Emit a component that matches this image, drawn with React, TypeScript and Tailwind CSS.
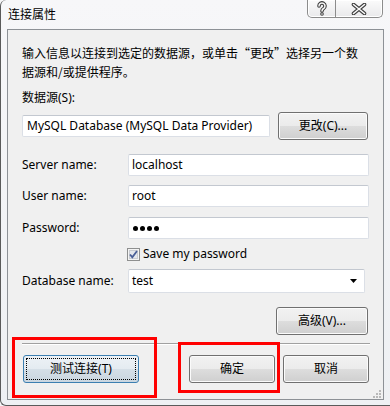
import React from 'react'

const font = "font-['Noto_Sans','Noto_Sans_CJK_SC',sans-serif]"
const cjk = "font-['Noto_Sans_CJK_SC',sans-serif]"

const btn =
  'flex items-center justify-center h-[28px] rounded-[3px] border border-[#707070] bg-[linear-gradient(#f2f2f2_0%,#ebebeb_50%,#dddddd_51%,#cfcfcf_100%)] shadow-[inset_0_0_0_1px_#fbfbfb] text-[12px] text-black'

const field =
  'h-[22px] flex items-center rounded-[2px] border border-[#dbdfe6] border-t-[#c3c8d0] bg-white px-[3px] text-[12px] text-black'

function HelpIcon() {
  return (
    <svg width="12" height="15" viewBox="0 0 12 15">
      <path d="M3 5 A3 3 0 1 1 7.6 7.5 C6.4 8.2 6 8.8 6 10" fill="none" stroke="#3d3d3d" strokeWidth="3.6" strokeLinecap="round" />
      <circle cx="6" cy="13" r="1.8" fill="#3d3d3d" />
      <path d="M3 5 A3 3 0 1 1 7.6 7.5 C6.4 8.2 6 8.8 6 10" fill="none" stroke="#fafafa" strokeWidth="1.5" strokeLinecap="round" />
      <circle cx="6" cy="13" r="0.8" fill="#fafafa" />
    </svg>
  )
}

function CloseIcon() {
  return (
    <svg width="16" height="12" viewBox="0 0 16 12">
      <path d="M2.5 1.5 L13.5 10.5 M13.5 1.5 L2.5 10.5" stroke="#3d3d3d" strokeWidth="3.6" strokeLinecap="round" />
      <path d="M2.5 1.5 L13.5 10.5 M13.5 1.5 L2.5 10.5" stroke="#fafafa" strokeWidth="1.6" strokeLinecap="round" />
    </svg>
  )
}

function Row({ label, children }: { label: string; children: React.ReactNode }) {
  return (
    <div className="flex items-center">
      <span className="w-[106px] shrink-0 text-[12px] text-black">{label}</span>
      {children}
    </div>
  )
}

export default function App() {
  return (
    <div className={`${font} relative w-[390px] h-[406px] overflow-hidden bg-[#f5f5f7]`}>
      <div className="flex flex-col w-[390px] h-[406px] rounded-tl-[6px] rounded-bl-[6px] border-l border-b border-[#5a5a5a] bg-[linear-gradient(180deg,#f7f7f9_0%,#eef0f3_100%)]">
        {/* title bar */}
        <div className="flex h-[29px] shrink-0 items-start justify-between pr-[7px]">
          <span className="mt-[7px] ml-[7px] text-[12px] leading-[16px] text-black">连接属性</span>
          <div className="flex h-[18px] rounded-b-[5px] border border-t-0 border-[#8c8c8c] bg-[linear-gradient(#fbfbfb,#e9e9eb)] shadow-[inset_0_0_0_1px_#ffffff]">
            <div className="flex w-[28px] items-center justify-center border-r border-[#8c8c8c]">
              <HelpIcon />
            </div>
            <div className="flex w-[46px] items-center justify-center">
              <CloseIcon />
            </div>
          </div>
        </div>

        {/* client area */}
        <div className="ml-[6px] mr-[6px] flex h-[371px] flex-col border border-[#8d9196] bg-[#f0f0f0] pl-[14px] pr-[14px]">
          <p className={`${cjk} mt-[13px] text-[12px] leading-[19px] text-black`}>
            输入信息以连接到选定的数据源，或单击“更改”选择另一个数据源和/或提供程序。
          </p>
          <p className="mt-[7px] text-[12px] leading-[19px] text-black">数据源(S):</p>

          <div className="mt-[5px] flex items-center gap-[8px]">
            <div className={`${field} w-[248px] bg-[#f7f7f7] px-[4px]`}>
              MySQL Database (MySQL Data Provider)
            </div>
            <button className={`${btn} h-[27px] w-[90px]`}>更改(C)...</button>
          </div>

          <div className="mt-[14px]">
            <Row label="Server name:">
              <div className={`${field} flex-1`}>localhost</div>
            </Row>
          </div>
          <div className="mt-[9px]">
            <Row label="User name:">
              <div className={`${field} flex-1`}>root</div>
            </Row>
          </div>
          <div className="mt-[10px]">
            <Row label="Password:">
              <div className={`${field} flex-1 gap-[2px] pl-[4px]`}>
                <span className="h-[5px] w-[5px] rounded-full bg-black" />
                <span className="h-[5px] w-[5px] rounded-full bg-black" />
                <span className="h-[5px] w-[5px] rounded-full bg-black" />
                <span className="h-[5px] w-[5px] rounded-full bg-black" />
              </div>
            </Row>
          </div>

          <div className="mt-[7px] flex h-[16px] items-center pl-[105px]">
            <svg width="13" height="13" viewBox="0 0 13 13">
              <rect x="0.5" y="0.5" width="12" height="12" fill="#f4f4f4" stroke="#8e8f8f" />
              <rect x="2.5" y="2.5" width="8" height="8" fill="#e4e7ec" stroke="#c9ccd2" />
              <path d="M3 6.5 L5.3 9.2 L10 3" fill="none" stroke="#4a5f97" strokeWidth="1.8" />
            </svg>
            <span className="ml-[3px] text-[12px] text-black">Save my password</span>
          </div>

          <div className="mt-[7px] pr-[4px]">
            <Row label="Database name:">
              <div className={`${field} h-[24px] flex-1 justify-between pr-[6px]`}>
                <span>test</span>
                <svg width="8" height="5" viewBox="0 0 8 5">
                  <path d="M0 0 H7 L3.5 4 Z" fill="#000" />
                </svg>
              </div>
            </Row>
          </div>

          <div className="mt-[14px] flex justify-end pr-[1px]">
            <button className={`${btn} w-[92px]`}>高级(V)...</button>
          </div>

          <div className="mt-[8px] mr-[-1px] h-[1px] bg-[#a0a0a0] shadow-[0_1px_0_#ffffff]" />

          <div className="mt-[11px] flex items-center">
            <button className="ml-[1px] flex h-[28px] w-[116px] items-center justify-center rounded-[3px] border border-[#3c7fb1] bg-[linear-gradient(#edf2f6_0%,#e4ebf1_50%,#d5dfe7_51%,#cad6e0_100%)] p-[2px] text-[12px] text-black">
              <span className="flex h-full w-full items-center justify-center border border-dotted border-black">
                测试连接(T)
              </span>
            </button>
            <div className="ml-auto flex gap-[8px]">
              <button className={`${btn} w-[86px]`}>确定</button>
              <button className={`${btn} w-[86px]`}>取消</button>
            </div>
          </div>

          <div className="mt-[7px] mr-[-13px] flex justify-end">
            <svg width="9" height="9" viewBox="0 0 9 9">
              <g fill="#b8b8b8">
                <rect x="6" y="0" width="2" height="2" />
                <rect x="3" y="3" width="2" height="2" />
                <rect x="6" y="3" width="2" height="2" />
                <rect x="0" y="6" width="2" height="2" />
                <rect x="3" y="6" width="2" height="2" />
                <rect x="6" y="6" width="2" height="2" />
              </g>
            </svg>
          </div>
        </div>
      </div>

      {/* red annotation boxes */}
      <div className="pointer-events-none absolute left-[12px] top-[337px] h-[61px] w-[145px] border-[3px] border-[#ff0000]" />
      <div className="pointer-events-none absolute left-[178px] top-[342px] h-[51px] w-[102px] border-[3px] border-[#ff0000]" />
    </div>
  )
}
